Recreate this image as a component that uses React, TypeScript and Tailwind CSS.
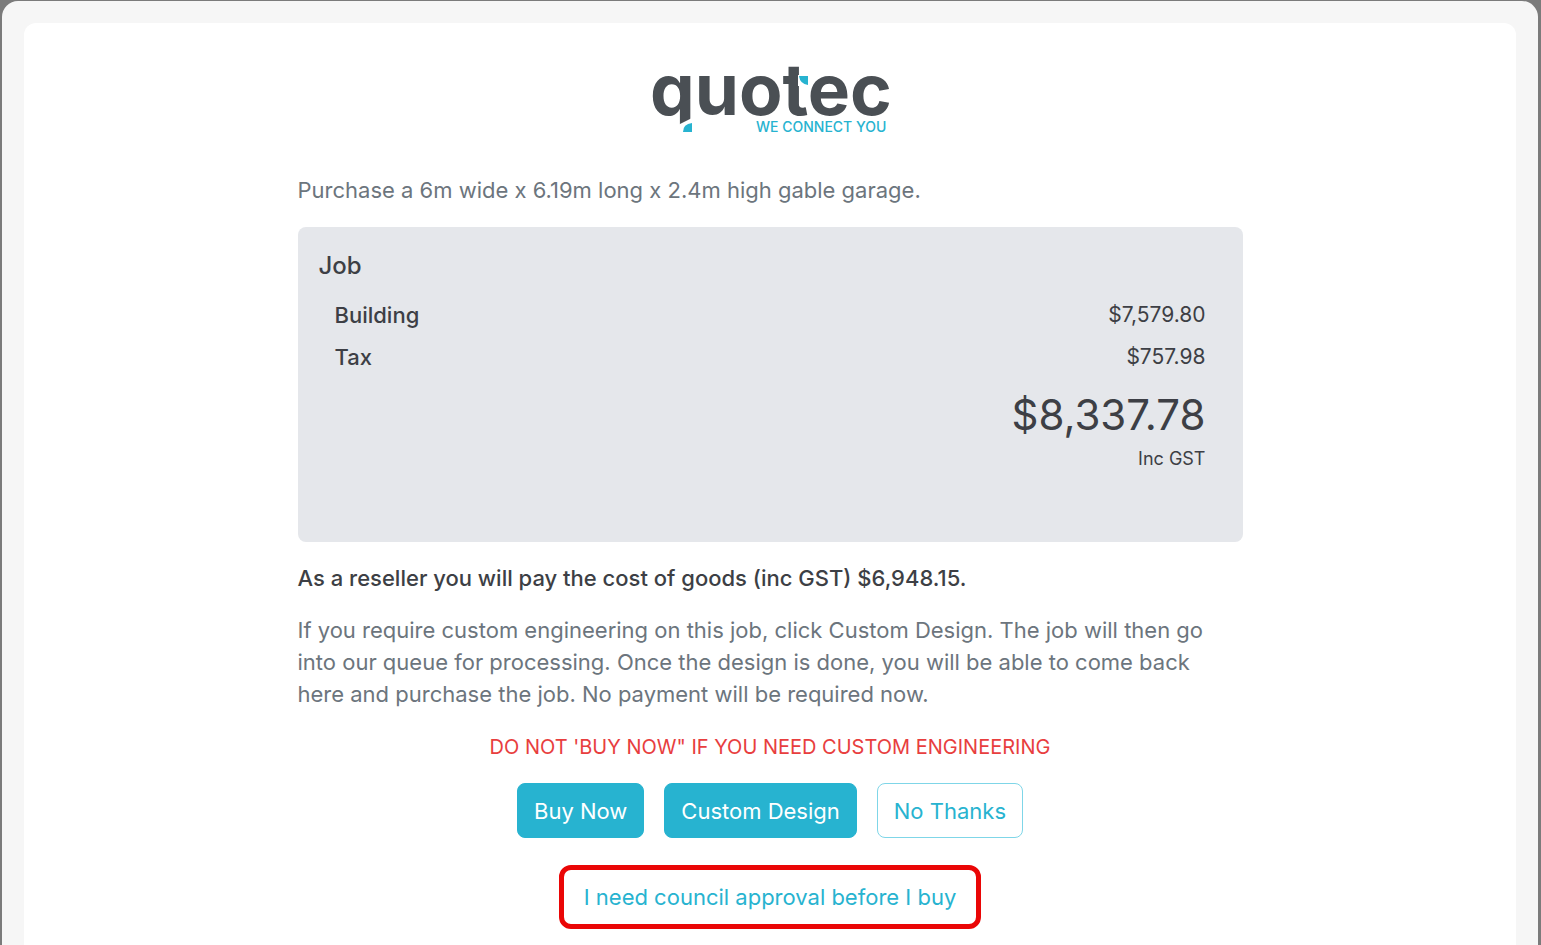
import type { ReactNode } from 'react';

type LineItem = {
  label: string;
  amount: string;
};

const items: LineItem[] = [
  { label: 'Building', amount: '$7,579.80' },
  { label: 'Tax', amount: '$757.98' },
];

const Logo = () => (
  <svg viewBox="0 0 240 72" className="w-60 h-[72px] overflow-visible" role="img" aria-label="quotec - we connect you">
    <text x="0" y="52" fontSize="71" fontWeight="700" fill="#4a4f54" fontFamily="Inter, sans-serif">
      quotec
    </text>
    {/* cut at the foot of the q */}
    <path d="M26 63 L44 54 V72 H26 Z" fill="#fff" />
    <path d="M33 69 Q33 61 42 60 V69 Z" fill="#27b3d0" />
    {/* corner of the t */}
    <path d="M148 12 H158 V23 H148 Z" fill="#fff" />
    <path d="M149 13 H158 V22 Q150 21 149 13 Z" fill="#27b3d0" />
    <text x="106" y="69" fontSize="14" fontWeight="500" fill="#27b3d0" fontFamily="Inter, sans-serif">
      WE CONNECT YOU
    </text>
  </svg>
);

const Button = ({ children, outline = false }: { children: ReactNode; outline?: boolean }) => (
  <button
    type="button"
    className={`h-[55px] px-4 rounded-lg border cursor-pointer ${
      outline ? 'border-[#7fd6e8] bg-white text-[#27b3d0]' : 'border-[#27b3d0] bg-[#27b3d0] text-white'
    }`}
  >
    {children}
  </button>
);

const App = () => {
  return (
    <div className="min-h-screen flex flex-col bg-[#7b7b7b] pt-px pl-0.5 pr-[3px] font-[Inter,sans-serif] text-[22px] leading-8 text-[#3d3f45]">
      <div className="flex-1 flex flex-col rounded-t-2xl bg-[#f6f6f6] px-[22px] pt-[22px]">
        <main className="flex-1 rounded-t-xl bg-white px-6 pt-10">
          <div className="max-w-[945px] mx-auto">
            <div className="flex justify-center">
              <Logo />
            </div>

            <p className="mt-[39px] text-[#6c757d]">Purchase a 6m wide x 6.19m long x 2.4m high gable garage.</p>

            <section className="mt-[21px] min-h-[315px] rounded-lg bg-[#e5e7eb] pt-[23px] pl-[21px] pr-[37px]">
              <h2 className="text-2xl leading-8 font-medium">Job</h2>
              <table className="mt-3 w-full">
                <tbody>
                  {items.map((item) => (
                    <tr key={item.label} className="h-[42px]">
                      <th scope="row" className="pl-4 text-left font-medium">{item.label}</th>
                      <td className="text-right text-[21px]">{item.amount}</td>
                    </tr>
                  ))}
                </tbody>
              </table>
              <p className="mt-[9px] text-right text-[42px] leading-[56px]">$8,337.78</p>
              <p className="text-right text-lg leading-8">Inc GST</p>
            </section>

            <p className="mt-5 font-medium">As a reseller you will pay the cost of goods (inc GST) $6,948.15.</p>
            <p className="mt-5 pr-6 text-[#6c757d]">
              If you require custom engineering on this job, click Custom Design. The job will then go into our queue
              for processing. Once the design is done, you will be able to come back here and purchase the job. No
              payment will be required now.
            </p>
            <p className="mt-[21px] text-center text-xl leading-8 text-[#e83e3e]">
              DO NOT 'BUY NOW" IF YOU NEED CUSTOM ENGINEERING
            </p>

            <div className="mt-5 flex justify-center gap-5">
              <Button>Buy Now</Button>
              <Button>Custom Design</Button>
              <Button outline>No Thanks</Button>
            </div>

            <div className="mt-[27px] flex justify-center">
              <a
                href="#council"
                className="h-16 px-5 flex items-center rounded-xl border-5 border-[#ea0606] text-[#27b3d0]"
              >
                I need council approval before I buy
              </a>
            </div>
          </div>
        </main>
      </div>
    </div>
  );
};

export default App;
